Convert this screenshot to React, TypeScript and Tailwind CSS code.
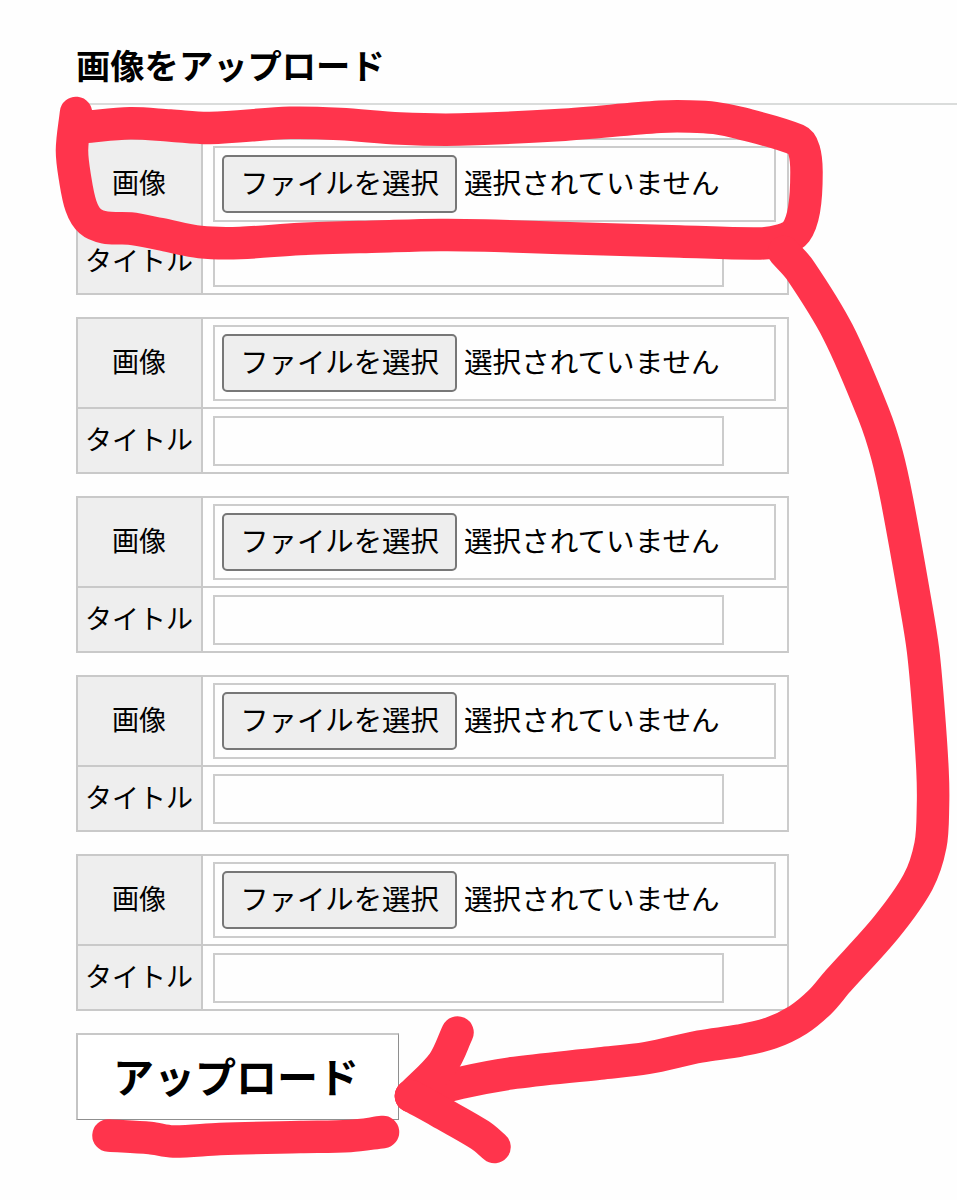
type Point = [number, number];

const rows = [1, 2, 3, 4, 5];

const frame: Point[] = [
  [76, 113], [72, 150], [75, 178], [81, 206], [90, 221], [105, 227.5], [130, 228.5], [160, 234], [200, 242], [240, 243], [300, 239],
  [380, 236.5], [440, 235], [485, 235.5], [560, 238], [680, 241.5], [760, 243.5], [782, 240], [796, 232], [804, 210], [806.5, 172],
  [804, 150], [797, 140], [740, 123], [715, 118], [690, 116.5], [660, 116.8], [560, 125], [460, 129.5], [400, 128.5], [340, 124],
  [290, 122.8], [210, 128], [170, 125.5], [130, 123.3], [84, 127],
];

const arrow: Point[] = [
  [784, 252], [800, 270], [838, 332], [874, 415], [887, 455], [897, 500], [915, 600], [923, 650], [928.5, 710], [932.5, 770],
  [933, 805], [930.5, 845], [918, 882], [886.5, 927], [838, 981], [820, 1002], [798, 1020], [771, 1033], [740, 1040.5], [700, 1046.5],
  [647, 1058], [600, 1063.5], [510, 1073.5], [460, 1083], [411, 1096],
];

const headTop: Point[] = [[457.5, 1032.5], [443, 1063], [411, 1096]];
const headBottom: Point[] = [[411, 1096], [440, 1112], [480, 1135], [494.5, 1147]];

const underline: Point[] = [[108.5, 1135.5], [150, 1138], [173, 1141.5], [220, 1139], [300, 1137], [350, 1136], [383, 1132]];

// Smooth curve through all points (Catmull-Rom to bezier)
function smooth(points: Point[]) {
  let d = `M${points[0][0]} ${points[0][1]}`;
  for (let i = 0; i < points.length - 1; i++) {
    const p0 = points[i - 1] || points[i];
    const p1 = points[i];
    const p2 = points[i + 1];
    const p3 = points[i + 2] || p2;
    const len = Math.hypot(p2[0] - p1[0], p2[1] - p1[1]);
    const a = len / (Math.hypot(p2[0] - p0[0], p2[1] - p0[1]) * 3);
    const b = len / (Math.hypot(p3[0] - p1[0], p3[1] - p1[1]) * 3);
    d += `C${p1[0] + (p2[0] - p0[0]) * a} ${p1[1] + (p2[1] - p0[1]) * a} ${p2[0] - (p3[0] - p1[0]) * b} ${p2[1] - (p3[1] - p1[1]) * b} ${p2[0]} ${p2[1]}`;
  }
  return d;
}

function UploadRow() {
  return (
    <div className="w-[713px] border-2 border-[#c9c9c9] border-r-[#cccccc]">
      <div className="flex h-[90px] border-b-2 border-[#c9c9c9]">
        <div className="flex w-[125px] shrink-0 items-center justify-center border-r-2 border-[#c9c9c9] bg-[#eeeeee] pr-px pb-1 text-[27px]">
          画像
        </div>
        <div className="pt-1.5 pl-[10px]">
          <div className="flex h-[76px] w-[563px] items-center border-2 border-[#cccccc] pl-[7px]">
            <button className="h-[58px] w-[235px] shrink-0 rounded-[5px] border-2 border-[#777777] bg-[#eeeeee] pb-1 text-[28.4px] leading-none whitespace-nowrap">
              ファイルを選択
            </button>
            <span className="ml-[7px] pb-1 text-[28.6px] leading-none whitespace-nowrap">選択されていません</span>
          </div>
        </div>
      </div>
      <div className="flex h-[63px]">
        <div className="flex w-[125px] shrink-0 items-center justify-center border-r-2 border-[#c9c9c9] bg-[#eeeeee] pr-px pb-0.5 text-[27px]">
          タイトル
        </div>
        <div className="pt-[7px] pl-[10px]">
          <input type="text" className="block h-[50px] w-[511px] border-2 border-[#cccccc] px-2 text-[28px] outline-none" />
        </div>
      </div>
    </div>
  );
}

export default function App() {
  return (
    <div className="relative h-[1200px] w-[957px] overflow-hidden bg-[#fefefe] pl-[76px] font-['Noto_Sans_CJK_JP',sans-serif] text-black">
      <h1 className="flex h-[105px] items-end border-b-2 border-[#dadcdb] pb-[22px] text-[34.3px] leading-[34px] font-bold">
        画像をアップロード
      </h1>

      <div className="mt-[33px] flex flex-col gap-[22px]">
        {rows.map((row) => (
          <UploadRow key={row} />
        ))}
      </div>

      <button className="mt-[22px] block h-[87px] w-[323px] border-2 border-r border-b border-t-[#c8c8c8] border-r-[#8f8f8f] border-b-[#8f8f8f] border-l-[#c4c4c4] bg-white pr-1 pb-1 text-[41px] leading-none font-bold">
        アップロード
      </button>

      {/* Hand-drawn marks */}
      <svg
        className="pointer-events-none absolute top-0 left-0"
        width="957"
        height="1200"
        viewBox="0 0 957 1200"
        fill="none"
        stroke="#ff344c"
        strokeWidth="32.5"
        strokeLinecap="round"
        strokeLinejoin="round"
      >
        <path d={smooth(frame)} />
        <path d={smooth(arrow)} />
        <path d={smooth(headTop)} />
        <path d={smooth(headBottom)} />
        <path d={smooth(underline)} />
      </svg>
    </div>
  );
}
